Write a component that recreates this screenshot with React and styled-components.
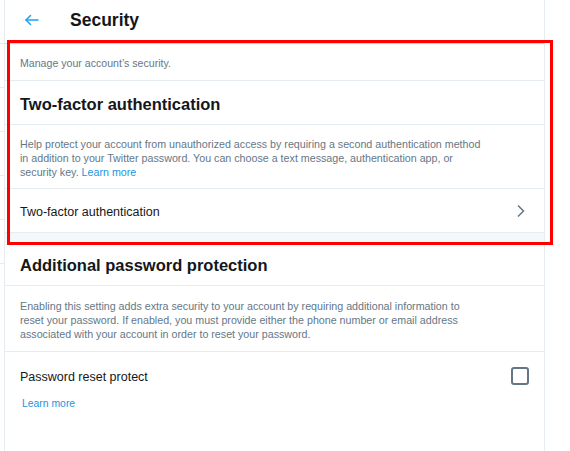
import React from 'react';
import styled, { createGlobalStyle } from 'styled-components';

const GlobalStyle = createGlobalStyle`
  html, body {
    margin: 0;
    padding: 0;
    background: #ffffff;
  }
  body {
    font-family: "Liberation Sans", Arial, sans-serif;
    color: #14171a;
  }
`;

const Page = styled.div`
  position: relative;
  display: flex;
  width: 570px;
  height: 451px;
  overflow: hidden;
  background: #ffffff;
`;

const SideStrip = styled.div`
  width: 4px;
  flex-shrink: 0;
`;

const SideItem = styled.div`
  height: 43px;
  border-bottom: 1px solid #e6ecf0;
`;

const Column = styled.div`
  width: 539px;
  flex-shrink: 0;
  border-left: 1px solid #e6ecf0;
  border-right: 1px solid #e6ecf0;
`;

const Header = styled.div`
  display: flex;
  align-items: center;
  height: 43px;
  padding: 0 15px;
  border-bottom: 1px solid #ccd6dd;
`;

const BackButton = styled.button`
  display: flex;
  align-items: center;
  justify-content: center;
  width: 24px;
  height: 30px;
  margin-right: 26px;
  margin-top: -3px;
  padding: 0;
  border: none;
  background: transparent;
  color: #1da1f2;
  cursor: pointer;
`;

const Title = styled.h2`
  margin: -3px 0 0;
  font-size: 17.5px;
  font-weight: 700;
`;

const Intro = styled.div`
  height: 37px;
  padding: 2px 15px 0;
  box-sizing: border-box;
  display: flex;
  align-items: center;
  font-size: 10.6px;
  color: #657786;
  border-bottom: 1px solid #e6ecf0;
`;

const SectionTitle = styled.h3`
  margin: 0;
  height: ${p => p.$h}px;
  box-sizing: border-box;
  padding: 3px 15px 0;
  display: flex;
  align-items: center;
  font-size: 16.5px;
  font-weight: 700;
  border-bottom: 1px solid #e6ecf0;
`;

const Description = styled.p`
  margin: 0;
  padding: ${p => p.$top || 12}px 15px ${p => p.$bottom || 9}px;
  font-size: 10.7px;
  line-height: 14px;
  color: #657786;
  border-bottom: 1px solid #e6ecf0;
`;

const Link = styled.a`
  color: #1b95e0;
  text-decoration: none;
  cursor: pointer;
`;

const Row = styled.div`
  display: flex;
  align-items: center;
  justify-content: space-between;
  height: 43px;
  box-sizing: border-box;
  padding: 2px 15px 0;
  font-size: 12.5px;
  cursor: pointer;
`;

const Chevron = styled.span`
  display: flex;
  color: #657786;
  margin-right: 4px;
  margin-top: -2px;
`;

const Separator = styled.div`
  height: 10px;
  background: #f5f8fa;
  border-top: 1px solid #e6ecf0;
`;

const OptionRow = styled.div`
  padding: 17px 15px 0;
`;

const OptionTop = styled.div`
  display: flex;
  align-items: center;
  justify-content: space-between;
  font-size: 12.5px;
`;

const Checkbox = styled.span`
  width: 14px;
  height: 14px;
  border: 2px solid #657786;
  border-radius: 3px;
  margin-top: -2px;
`;

const OptionLink = styled.div`
  margin-top: 13px;
  padding-left: 2px;
  font-size: 10.4px;
`;

const Highlight = styled.div`
  position: absolute;
  left: 7px;
  top: 40px;
  width: 540px;
  height: 199px;
  border: 3px solid #ff0000;
  pointer-events: none;
`;

function ArrowLeft() {
  return (
    <svg width="18" height="18" viewBox="0 0 24 24" fill="none" stroke="currentColor" strokeWidth="2" strokeLinecap="round" strokeLinejoin="round">
      <path d="M20 12H4" />
      <path d="M10 6l-6 6 6 6" />
    </svg>
  );
}

function ChevronRight() {
  return (
    <svg width="9" height="14" viewBox="0 0 9 14" fill="none" stroke="currentColor" strokeWidth="1.5" strokeLinejoin="miter">
      <path d="M2 1.5l5.5 5.5L2 12.5" />
    </svg>
  );
}

function App() {
  return (
    <Page>
      <GlobalStyle />
      <SideStrip>
        {[0, 1, 2, 3, 4, 5].map(i => <SideItem key={i} />)}
      </SideStrip>
      <Column>
        <Header>
          <BackButton aria-label="Back"><ArrowLeft /></BackButton>
          <Title>Security</Title>
        </Header>
        <Intro>Manage your account’s security.</Intro>
        <SectionTitle $h={44}>Two-factor authentication</SectionTitle>
        <Description>
          Help protect your account from unauthorized access by requiring a second authentication method<br />
          in addition to your Twitter password. You can choose a text message, authentication app, or<br />
          security key. <Link>Learn more</Link>
        </Description>
        <Row>
          <span>Two-factor authentication</span>
          <Chevron><ChevronRight /></Chevron>
        </Row>
        <Separator />
        <SectionTitle $h={43}>Additional password protection</SectionTitle>
        <Description $top={13} $bottom={10}>
          Enabling this setting adds extra security to your account by requiring additional information to<br />
          reset your password. If enabled, you must provide either the phone number or email address<br />
          associated with your account in order to reset your password.
        </Description>
        <OptionRow>
          <OptionTop>
            <span>Password reset protect</span>
            <Checkbox />
          </OptionTop>
          <OptionLink><Link>Learn more</Link></OptionLink>
        </OptionRow>
      </Column>
      <Highlight />
    </Page>
  );
}

export default App;
